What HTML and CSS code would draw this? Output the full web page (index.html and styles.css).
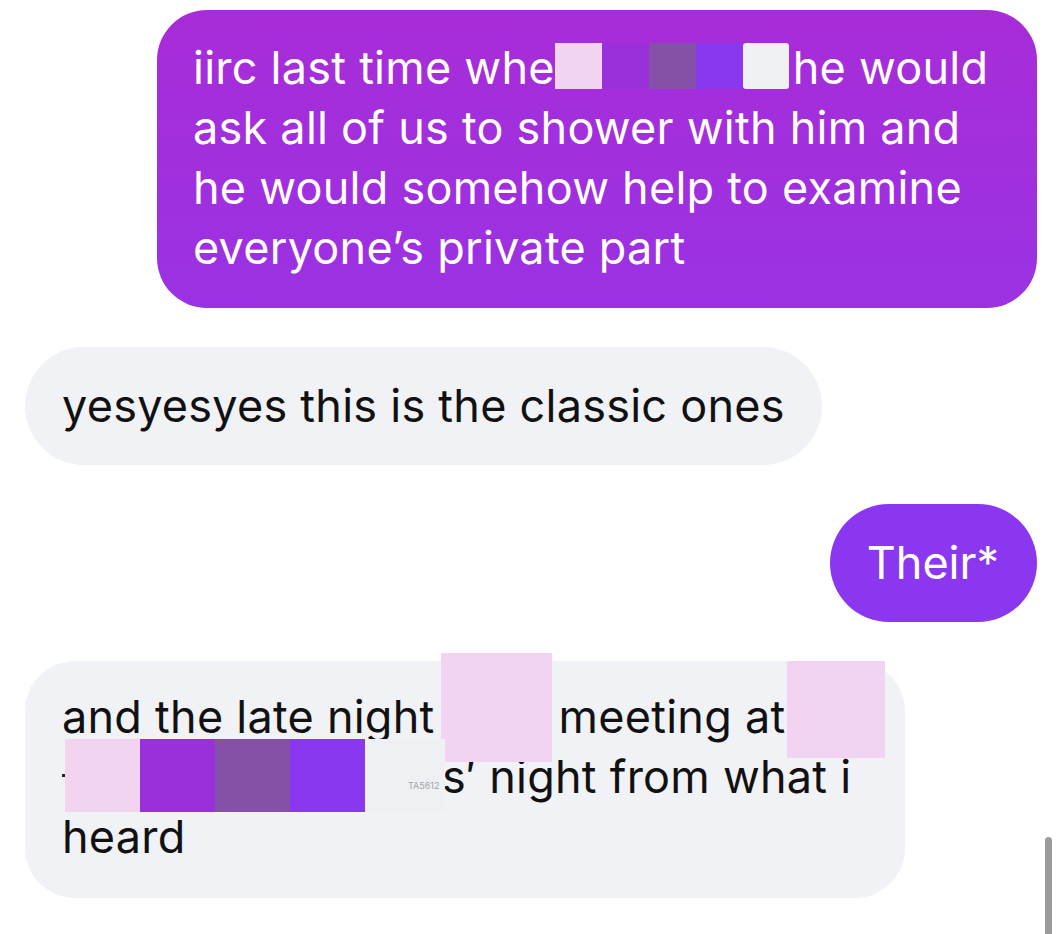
FILE: index.html
```html
<!DOCTYPE html>
<html lang="en">
<head>
    <meta charset="UTF-8">
    <meta name="viewport" content="width=device-width, initial-scale=1.0">
    <title>Chat</title>
    <link rel="stylesheet" href="styles.css">
</head>
<body>

<div class="chat">
    <!-- mensaje enviado -->
    <div class="bubble sent first">
        iirc last time whe<span class="mask strip-top"><span class="strip"><i class="pink"></i><i class="violet"></i><i class="plum"></i><i class="blue"></i><i class="light"></i></span></span>he would<br>
        ask all of us to shower with him and<br>
        he would somehow help to examine<br>
        everyone’s private part
    </div>

    <div class="bubble received">yesyesyes this is the classic ones</div>

    <div class="bubble sent last">Their*</div>

    <div class="bubble received wide">
        and the late night<span class="mask gap-big"><span class="block big"></span></span>meeting at<span class="mask gap-medium"><span class="block medium"></span></span><br>
        <span class="tick"></span><span class="mask strip-row"><span class="strip row"><i class="pink"></i><i class="violet"></i><i class="plum"></i><i class="blue"></i><i class="light wider"></i></span><span class="stamp">TA5612</span></span>s′ night from what i<br>
        heard
    </div>
</div>

<div class="scrollbar"></div>

</body>
</html>
```

FILE: styles.css
```css
/* General */
body {
    margin: 0;
    background: #fff;
    font-family: "Inter", "Liberation Sans", sans-serif;
    overflow: hidden;
}

.chat {
    display: flex;
    flex-direction: column;
    gap: 39px;
    padding: 10px 25px;
}

/* Burbujas */
.bubble {
    font-size: 45px;
    letter-spacing: 0.25px;
    line-height: 60px;
    padding: 29px 37px;
    border-radius: 59px;
    white-space: nowrap;
    width: fit-content;
}
.sent {
    align-self: flex-end;
    color: #fff;
    background: #8a37ef;
}
.received {
    align-self: flex-start;
    color: #111;
    background: #f1f2f6;
}
.first {
    width: 808px;
    padding: 28px 36px 30px;
    border-radius: 50px;
    background: linear-gradient(180deg, #a82cd8, #9a32e3);
}
.last {
    padding: 29px 38px 29px 37px;
    letter-spacing: 0;
}
.wide {
    width: 806px;
    padding: 26px 37px 31px;
    border-radius: 50px;
}

/* Tachones: el hueco va en el texto, el bloque va encima */
.mask {
    display: inline-block;
    position: relative;
    height: 0;
}
.strip,
.block {
    position: absolute;
    display: flex;
}
.strip i {
    display: block;
}

.strip-top {
    width: 238px;
}
.strip-top .strip {
    top: -41px;
    left: 0;
}
.strip-top i {
    width: 47px;
    height: 46px;
}
.strip-top .light {
    width: 46px;
    border-radius: 3px;
}

.strip-row {
    width: 377px;
}
.strip-row .strip {
    top: -54px;
    left: 0;
}
.row i {
    width: 75px;
    height: 73px;
}
.row i.wider {
    width: 80px;
}

.pink { background: #f3d4f0; }
.violet { background: #9a30dc; }
.plum { background: #8551a8; }
.blue { background: #8938f0; }
.light { background: #eff0f3; }

.block {
    background: #f2d3f1;
}
.gap-big {
    width: 124px;
}
.big {
    left: 6px;
    top: -80px;
    width: 111px;
    height: 109px;
}
.gap-medium {
    width: 100px;
}
.medium {
    left: 2px;
    top: -72px;
    width: 98px;
    height: 97px;
}

.stamp {
    position: absolute;
    left: 343px;
    top: -12px;
    font-size: 9px;
    line-height: 10px;
    letter-spacing: 0;
    color: #a2a2a8;
}
.tick {
    display: inline-block;
    width: 3px;
    height: 3px;
    background: #222;
    vertical-align: 16px;
}

/* Barra de desplazamiento */
.scrollbar {
    position: fixed;
    right: 10px;
    bottom: 0;
    width: 7px;
    height: 97px;
    background: #9b9b9b;
    border-radius: 4px 4px 0 0;
}
```
